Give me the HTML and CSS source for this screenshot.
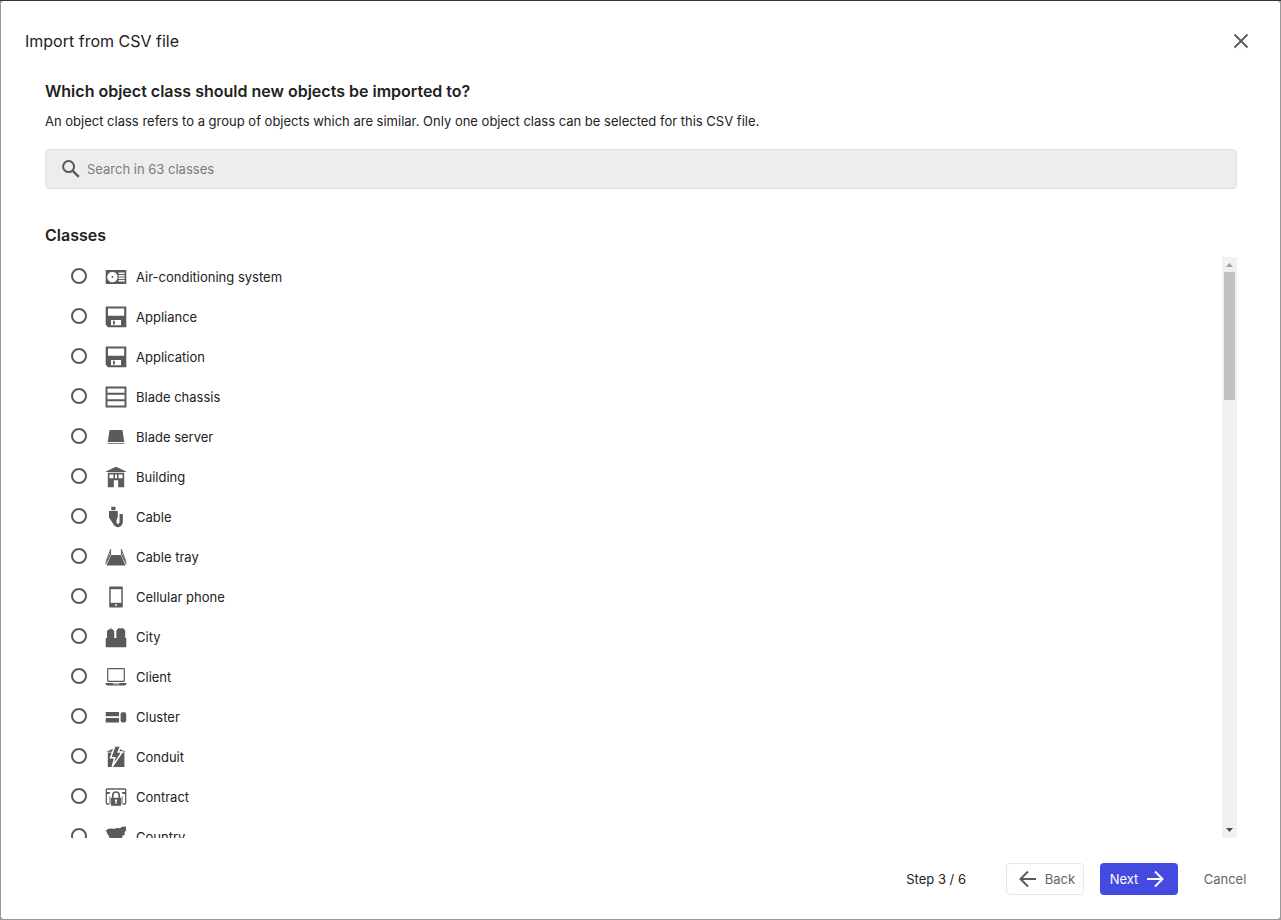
FILE: index.html
```html
<!DOCTYPE html>
<html lang="en">
<head>
  <meta charset="UTF-8">
  <title>Import from CSV file</title>
  <meta name="viewport" content="width=device-width, initial-scale=1.0">
  <link rel="stylesheet" href="styles.css">
</head>
<body>

<div class="dialog" role="dialog" aria-labelledby="dialogTitle">
  <header class="dialog-header">
    <h1 id="dialogTitle">Import from CSV file</h1>
    <button type="button" class="close" aria-label="Close">
      <svg width="16" height="16" viewBox="0 0 16 16"><path d="M1.5 1.5l13 13M14.5 1.5l-13 13" fill="none" stroke="currentColor" stroke-width="1.9"/></svg>
    </button>
  </header>

  <main class="content">
    <h2>Which object class should new objects be imported to?</h2>
    <p class="hint">An object class refers to a group of objects which are similar. Only one object class can be selected for this CSV file.</p>

    <label class="search">
      <svg width="18" height="18" viewBox="0 0 18 18"><circle cx="6.6" cy="6.6" r="5.5" fill="none" stroke="currentColor" stroke-width="2"/><path d="M10.8 10.8l6 6" stroke="currentColor" stroke-width="2.4"/></svg>
      <input type="text" placeholder="Search in 63 classes" aria-label="Search classes">
    </label>

    <h2 class="list-title">Classes</h2>
    <div class="list-wrap">
      <div class="list">
        <label class="row"><input type="radio" name="class">
          <svg class="icon" viewBox="0 0 22 22"><path d="M.7 4h20.6v14H.7z"/><circle class="cut" cx="7.4" cy="11" r="5.2"/><circle cx="7.4" cy="11" r=".9"/><path class="cut" d="M13.6 6.500h6v1.500h-6zM13.6 9h6v1.500h-6zM13.6 11.500h6v1.500h-6zM13.6 14h6v1.500h-6z"/></svg>
          <span>Air-conditioning system</span></label>
        <label class="row"><input type="radio" name="class">
          <svg class="icon" viewBox="0 0 22 22"><path d="M.7.4h20.6v20.8H3L.7 18.8z"/><path class="cut" d="M3 2.5h16.2v7.2H3zM6 14h10v5.2H6z"/><path d="M8 14.8h1.8v3.6H8z"/></svg>
          <span>Appliance</span></label>
        <label class="row"><input type="radio" name="class">
          <svg class="icon" viewBox="0 0 22 22"><path d="M.7.4h20.6v20.8H3L.7 18.8z"/><path class="cut" d="M3 2.5h16.2v7.2H3zM6 14h10v5.2H6z"/><path d="M8 14.8h1.8v3.6H8z"/></svg>
          <span>Application</span></label>
        <label class="row"><input type="radio" name="class">
          <svg class="icon" viewBox="0 0 22 22"><path class="line" d="M1.5 1.5h19v19h-19zM1.5 7.800h19M1.5 14.200h19" stroke-width="1.900"/></svg>
          <span>Blade chassis</span></label>
        <label class="row"><input type="radio" name="class">
          <svg class="icon" viewBox="0 0 22 22"><path d="M4.6 4h12.8l1.9 12H2.7z"/><path d="M2.6 17h16.8v1H2.6z" opacity=".75"/></svg>
          <span>Blade server</span></label>
        <label class="row"><input type="radio" name="class">
          <svg class="icon" viewBox="0 0 22 22"><path d="M11 .8l9.800 4.400v.8H1.200v-.8z"/><path d="M2.800 6.800h16.400v14.400H13.200v-7H8.800v7h-6z"/><path class="cut" d="M4.400 8.400H8.500v3.800H4.400zM13.500 8.400h4.100v3.800h-4.100zM10 8.400h2v3.800h-2z"/></svg>
          <span>Building</span></label>
        <label class="row"><input type="radio" name="class">
          <svg class="icon" viewBox="0 0 22 22"><path d="M6.300.8h4.200v3.400H6.300zM4 5h8.800v6l-1.300 3v3.500H8L4 11.500z"/><path class="line" d="M9 13c0 8.500 7.200 8 7.200 2.500V8" stroke-width="3.300"/></svg>
          <span>Cable</span></label>
        <label class="row"><input type="radio" name="class">
          <svg class="icon" viewBox="0 0 22 22"><path d="M6.200 9h9.600l4.600 10.400H1.600z"/><path class="line" d="M5.600 3v5.500L.8 18.500M5.400 4L.8 16.500M5.400 7.500L2 14.500M16.400 3v5.500l4.800 10M16.600 4l4.600 12.500M16.600 7.500l3.400 7" stroke-width=".9"/></svg>
          <span>Cable tray</span></label>
        <label class="row"><input type="radio" name="class">
          <svg class="icon" viewBox="0 0 22 22"><rect x="4.200" y=".6" width="13.600" height="20.800" rx="1.200"/><path class="cut" d="M5.700 3.200h10.600v13.600H5.700z"/><circle class="cut" cx="11" cy="19" r="1"/></svg>
          <span>Cellular phone</span></label>
        <label class="row"><input type="radio" name="class">
          <svg class="icon" viewBox="0 0 22 22"><path d="M.7 12h1.300V5l2-1.700h1.500L6 1l.5 2.300h1L9.200 5v7h2.200V4.500l2-2.200h4.800l2 2.200V12h1.100v9.300H.7z"/></svg>
          <span>City</span></label>
        <label class="row"><input type="radio" name="class">
          <svg class="icon" viewBox="0 0 22 22"><rect class="line" x="2.700" y="2.700" width="16.600" height="12.600" rx=".6" stroke-width="1.200"/><path d="M.6 17h20.800v1.200l-1.400 1.300H2L.6 18.200z"/><path class="cut" d="M8 17h6.400v1.400H8z" opacity=".6"/></svg>
          <span>Client</span></label>
        <label class="row"><input type="radio" name="class">
          <svg class="icon" viewBox="0 0 22 22"><path d="M.7 6H14v4.300H.7zM.7 12H14v4.500H.7z"/><rect x="15.600" y="6.200" width="5.600" height="10.200" rx="1.800"/></svg>
          <span>Cluster</span></label>
        <label class="row"><input type="radio" name="class">
          <svg class="icon" viewBox="0 0 22 22"><path d="M1 5.800L11 1.400l10 4.400H1zM2.800 6.500h16.600V21H2.800z"/><path class="bolt" d="M9.800 0h6l-2.600 6h4L7.200 20.800l2.600-9H5.600z"/></svg>
          <span>Conduit</span></label>
        <label class="row"><input type="radio" name="class">
          <svg class="icon" viewBox="0 0 22 22"><rect class="line" x="1.300" y="3" width="19.400" height="15" rx="1" stroke-width="1.300"/><path d="M1 6h20v2H1z"/><path class="cut" d="M4.300 20V9c0-7 13.400-7 13.400 0v11z"/><path class="line" d="M5 18v-7.500M17 18v-7.500" stroke-width=".9"/><path class="line" d="M7.800 12.500V9.200c0-4.200 6.400-4.200 6.400 0v3.300" stroke-width="1.600"/><path d="M6 11.800h10v8H6z"/><circle class="cut" cx="11" cy="14.400" r="1.100"/><path class="cut" d="M10.400 14h1.200v4h-1.200z"/></svg>
          <span>Contract</span></label>
        <label class="row"><input type="radio" name="class">
          <svg class="icon" viewBox="0 0 22 22"><path d="M.9 4.500l2.500-1.700 4-.3 2 .5 2-1 3.600.2 2-1.400 3.800-.2.300 4-1.600 1.600.4 2.300-2.500 1.500-1 4H5l-1-3.800-1.300-1.700z"/></svg>
          <span>Country</span></label>
      </div>
      <div class="scrollbar" aria-hidden="true">
        <svg class="arrow up" viewBox="0 0 15 15"><path d="M4 10h7L7.500 6z"/></svg>
        <div class="thumb"></div>
        <svg class="arrow down" viewBox="0 0 15 15"><path d="M4 5h7L7.500 9z"/></svg>
      </div>
    </div>
  </main>

  <footer class="dialog-footer">
    <span class="step">Step 3 / 6</span>
    <button type="button" class="btn back">
      <svg width="18" height="18" viewBox="0 0 18 18"><path d="M17 9H2M9 1.500L1.500 9 9 16.500" fill="none" stroke="currentColor" stroke-width="2"/></svg>
      Back
    </button>
    <button type="button" class="btn next">
      Next
      <svg width="18" height="18" viewBox="0 0 18 18"><path d="M1 9h15M9 1.500L16.500 9 9 16.500" fill="none" stroke="currentColor" stroke-width="2"/></svg>
    </button>
    <button type="button" class="btn cancel">Cancel</button>
  </footer>
</div>

</body>
</html>
```
FILE: styles.css
```css
* { margin: 0; padding: 0; box-sizing: border-box; }
body, html { height: 100%; overflow: hidden; }
body {
  display: flex;
  padding: 0 1px 1px;
  border-top: 1px solid #38363a;
  background-color: #999;
  font-family: Inter, "Liberation Sans", sans-serif;
  font-size: 13px;
  line-height: 20px;
  color: #222;
}
button, input { font: inherit; }
button { border: none; background: none; cursor: pointer; }
.dialog {
  flex: 1;
  display: flex;
  flex-direction: column;
  min-width: 0;
  border-radius: 3px;
  background-color: #fff;
}
.dialog-header {
  display: flex;
  justify-content: space-between;
  align-items: center;
  height: 80px;
  padding: 0 31px 0 24px;
}
h1 { font-size: 16px; font-weight: 400; }
h2 { font-size: 16px; font-weight: 600; }
.close { display: flex; color: #5a5a5a; }
.content {
  flex: 1;
  display: flex;
  flex-direction: column;
  min-height: 0;
  padding: 0 43px 0 44px;
}
.hint { margin-top: 10px; }
.search {
  display: flex;
  align-items: center;
  gap: 7px;
  height: 40px;
  margin-top: 18px;
  padding: 0 16px;
  border: 1px solid #e0e0e0;
  border-radius: 4px;
  background-color: #ededed;
  color: #5a5a5a;
}
.search input { flex: 1; border: none; outline: none; background: none; }
.search input::placeholder { color: #7c7c7c; }
.list-title { margin-top: 36px; }
.list-wrap {
  flex: 1;
  display: flex;
  min-height: 0;
  margin-top: 12px;
}
.list { flex: 1; overflow-y: auto; scrollbar-width: none; }
.row {
  display: flex;
  align-items: center;
  height: 40px;
  padding-left: 26px;
}
.row input {
  appearance: none;
  width: 16px;
  height: 16px;
  margin: 0 18px 2px 0;
  border: 2px solid #5a5a5a;
  border-radius: 50%;
}
.row input:checked { background: radial-gradient(#444adf 4px, #fff 5px); }
.icon { width: 22px; height: 22px; margin-right: 9px; fill: #5a5a5a; }
.icon .cut { fill: #fff; }
.icon .line { fill: none; stroke: #5a5a5a; }
.icon .bolt { stroke: #fff; stroke-width: 1.5; }
.scrollbar {
  display: flex;
  flex-direction: column;
  width: 15px;
  background-color: #f1f1f1;
}
.arrow { width: 15px; height: 15px; }
.up { fill: #a3a3a3; }
.down { margin-top: auto; fill: #505050; }
.thumb { height: 22%; margin: 0 2px; background-color: #c1c1c1; }
.dialog-footer {
  display: flex;
  justify-content: flex-end;
  align-items: center;
  height: 81px;
  padding: 0 24px;
}
.step { margin-right: 40px; }
.btn {
  display: flex;
  align-items: center;
  justify-content: center;
  gap: 8px;
  height: 32px;
  border-radius: 4px;
  color: #666;
}
.back, .next { width: 78px; margin-right: 16px; }
.back { padding-left: 4px; border: 1px solid #e6e6e6; }
.back svg { color: #5a5a5a; }
.next { padding-right: 4px; background-color: #444adf; color: #fff; }
.cancel { width: 62px; }
```
